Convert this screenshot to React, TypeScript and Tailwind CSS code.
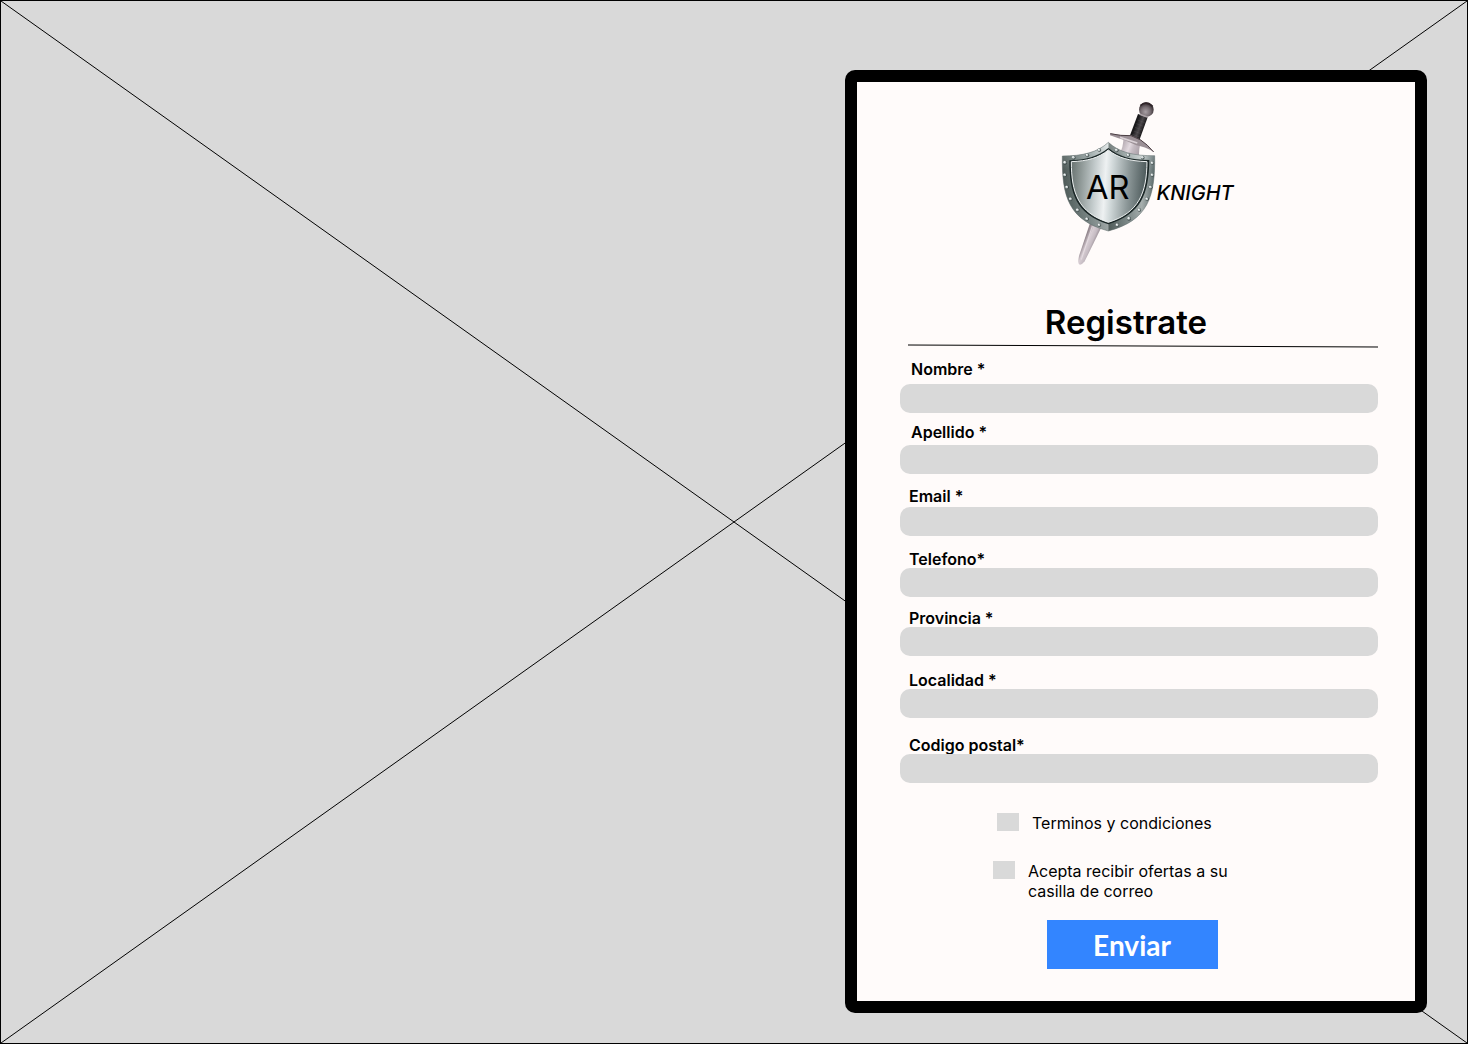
import React from "react";

const fields = [
  { id: "nombre", label: "Nombre *", type: "text", row: "mt-3 gap-1.5", text: "pl-[11px]" },
  { id: "apellido", label: "Apellido *", type: "text", row: "mt-2.5 gap-1", text: "pl-[11px]" },
  { id: "email", label: "Email *", type: "email", row: "mt-[13px] gap-0.5", text: "pl-[9px]" },
  { id: "telefono", label: "Telefono*", type: "tel", row: "mt-3.5", text: "pl-[9px]" },
  { id: "provincia", label: "Provincia *", type: "text", row: "mt-3", text: "pl-[9px]" },
  { id: "localidad", label: "Localidad *", type: "text", row: "mt-[15px]", text: "pl-[9px]" },
  { id: "codigo", label: "Codigo postal*", type: "text", row: "mt-[18px]", text: "pl-[9px]" },
];

const rivets = [
  [44, 211], [44, 248], [50, 285], [61, 320], [82, 353], [110, 380], [147, 398],
  [306, 212], [306, 248], [301, 285], [290, 320], [267, 353], [236, 379], [201, 398],
  [70, 196], [111, 189], [147, 173], [199, 174], [234, 188], [277, 196],
];

const shieldOutline = "M175 151 C143 181 98 192 37 192 C35 315 57 385 175 417 C294 385 316 315 314 191 C252 192 207 181 175 151Z";

function Backdrop() {
  return (
    <svg className="absolute inset-0 h-full w-full bg-[#d9d9d9]" aria-hidden="true">
      <line x1="0" y1="0" x2="100%" y2="100%" stroke="#000" />
      <line x1="0" y1="100%" x2="100%" y2="0" stroke="#000" />
    </svg>
  );
}

function Emblem() {
  return (
    <svg viewBox="18 18 312 510" className="h-[170px] w-[104px] shrink-0" role="img" aria-label="AR">
      <defs>
        <linearGradient id="rim" x1="0" x2="1" y1="0" y2="0">
          <stop offset="0" stopColor="#56615f" />
          <stop offset="0.12" stopColor="#74817f" />
          <stop offset="0.32" stopColor="#a9b5b5" />
          <stop offset="0.49" stopColor="#dde3e3" />
          <stop offset="0.51" stopColor="#66716f" />
          <stop offset="0.7" stopColor="#a5b1b1" />
          <stop offset="0.86" stopColor="#dfe6e5" />
          <stop offset="1" stopColor="#69787a" />
        </linearGradient>
        <linearGradient id="rimShade" x1="0" x2="0" y1="0" y2="1">
          <stop offset="0" stopColor="#fff" stopOpacity="0.15" />
          <stop offset="0.3" stopColor="#35413f" stopOpacity="0.25" />
          <stop offset="1" stopColor="#35413f" stopOpacity="0.4" />
        </linearGradient>
        <linearGradient id="face" x1="0" x2="1" y1="0" y2="0.06">
          <stop offset="0" stopColor="#66716f" />
          <stop offset="0.12" stopColor="#87918f" />
          <stop offset="0.33" stopColor="#c4cccd" />
          <stop offset="0.47" stopColor="#eef1f2" />
          <stop offset="0.56" stopColor="#d0d8d9" />
          <stop offset="0.78" stopColor="#8b9697" />
          <stop offset="1" stopColor="#4f5c5d" />
        </linearGradient>
        <linearGradient id="blade" gradientUnits="userSpaceOnUse" x1="205" y1="180" x2="262" y2="203">
          <stop offset="0" stopColor="#b3a9b0" />
          <stop offset="0.4" stopColor="#e2d9df" />
          <stop offset="0.6" stopColor="#c6bcc3" />
          <stop offset="1" stopColor="#a89da5" />
        </linearGradient>
        <linearGradient id="tip" gradientUnits="userSpaceOnUse" x1="105" y1="440" x2="138" y2="454">
          <stop offset="0" stopColor="#93878e" />
          <stop offset="0.3" stopColor="#d8ced4" />
          <stop offset="0.65" stopColor="#c5bbc2" />
          <stop offset="1" stopColor="#887d84" />
        </linearGradient>
        <linearGradient id="grip" gradientUnits="userSpaceOnUse" x1="256" y1="100" x2="282" y2="110">
          <stop offset="0" stopColor="#19181a" />
          <stop offset="0.5" stopColor="#4c484b" />
          <stop offset="1" stopColor="#151315" />
        </linearGradient>
        <radialGradient id="pommel" cx="0.45" cy="0.65" r="0.6">
          <stop offset="0" stopColor="#a9a0a5" />
          <stop offset="0.55" stopColor="#776d72" />
          <stop offset="1" stopColor="#352c30" />
        </radialGradient>
      </defs>
      <path d="M219 132 L275 153 Q264 165 268 205 L200 205 Q225 160 219 132Z" fill="url(#blade)" />
      <path d="M121 390 L156 402 L104 508 Q94 521 87 517 Q83 512 87 492Z" fill="url(#tip)" />
      <path d="M127 402 L94 503" stroke="#eee5ea" strokeWidth="2" />
      <path d="M264 66 L293 76 L268 145 L239 133Z" fill="url(#grip)" />
      <path d="M263 84l21 8M259 95l21 8M255 106l21 8M251 117l21 8M247 127l21 8" stroke="#77717555" strokeWidth="2" />
      <circle cx="289" cy="53" r="22" fill="url(#pommel)" />
      <path d="M271 41 Q288 25 308 43" fill="none" stroke="#302529" strokeWidth="5" />
      <path d="M269 67 l25 9" stroke="#aaa0a5" strokeWidth="5" />
      <path d="M180 124 Q212 132 244 130 L272 143 Q292 157 312 180 Q284 164 259 160 L225 145 Q201 138 180 130Z" fill="#9b9096" />
      <path d="M181 125 Q212 132 243 131 L272 144 Q292 157 311 180" fill="none" stroke="#4c3f44" strokeWidth="3" />
      <path d="M210 136 L262 153" stroke="#d9d0d5" strokeWidth="5" />

      <path d={shieldOutline} fill="url(#rim)" />
      <path d={shieldOutline} fill="url(#rimShade)" stroke="#5e6b6b" strokeWidth="1.5" />
      <path d="M175 168 C143 194 108 204 58 205 C58 306 79 367 175 397 C273 367 297 306 298 204 C243 204 207 194 175 168Z" fill="#1b2727" />
      <path d="M175 174 C146 198 113 207 64 209 C64 303 85 362 175 391 C267 362 290 303 291 209 C239 207 204 198 175 174Z" fill="url(#face)" stroke="#eef2f2" strokeWidth="3" />
      {rivets.map(([x, y]) => (
        <g key={`${x}-${y}`}>
          <circle cx={x + 1} cy={y + 1} r="5.5" fill="#303b3b" />
          <circle cx={x} cy={y} r="4.5" fill="#bfc8c8" />
          <circle cx={x - 1} cy={y - 1} r="2" fill="#fff" />
        </g>
      ))}
      <text x="173" y="321" textAnchor="middle" fontSize="98" fill="#000">AR</text>
    </svg>
  );
}

function Check({ id, className, children }: { id: string; className: string; children: React.ReactNode }) {
  return (
    <div className={`flex items-start gap-[13px] ${className}`}>
      <input id={id} type="checkbox" className="h-[18px] w-[22px] shrink-0 appearance-none bg-[#d9d9d9] checked:bg-[#3385ff]" />
      <label htmlFor={id} className="w-[220px] text-base leading-5">
        {children}
      </label>
    </div>
  );
}

export default function App() {
  return (
    <main className="relative flex min-h-screen items-start justify-end border border-black bg-[#d9d9d9] pt-[69px] pr-10 pb-[30px] font-['Inter',sans-serif] text-black">
      <Backdrop />
      <form className="relative flex w-[582px] max-w-full flex-col rounded-[10px] bg-black p-3" onSubmit={(e) => e.preventDefault()}>
        <div className="flex flex-col bg-[#fffbfa] pt-4 pr-[37px] pb-8 pl-[43px]">
          <div className="flex items-center justify-center pl-3">
            <Emblem />
            <span className="-ml-1 pt-5 text-xl leading-6 font-medium italic">KNIGHT</span>
          </div>
          <h1 className="mt-[34px] pr-[26px] text-center text-[33px] leading-10 font-semibold">Registrate</h1>
          <svg className="mt-0.5 ml-2 h-1 self-stretch" viewBox="0 0 470 4" preserveAspectRatio="none" aria-hidden="true">
            <line x1="0" y1="1" x2="470" y2="3" stroke="#000" />
          </svg>
          {fields.map((f) => (
            <div key={f.id} className={`flex flex-col ${f.row}`}>
              <label htmlFor={f.id} className={`text-base leading-[18px] font-semibold ${f.text}`}>
                {f.label}
              </label>
              <input id={f.id} name={f.id} type={f.type} className="h-[29px] w-full rounded-[10px] bg-[#d9d9d9] px-3 text-base" />
            </div>
          ))}
          <Check id="terminos" className="mt-[30px] ml-[97px]">
            Terminos y condiciones
          </Check>
          <Check id="ofertas" className="mt-7 ml-[93px]">
            Acepta recibir ofertas a su casilla de correo
          </Check>
          <div className="mt-[19px] flex justify-center pr-3.5">
            <button type="submit" className="h-[49px] w-[171px] bg-[#3385ff] font-['Lato',sans-serif] text-[28px] font-bold text-white">
              Enviar
            </button>
          </div>
        </div>
      </form>
    </main>
  );
}
